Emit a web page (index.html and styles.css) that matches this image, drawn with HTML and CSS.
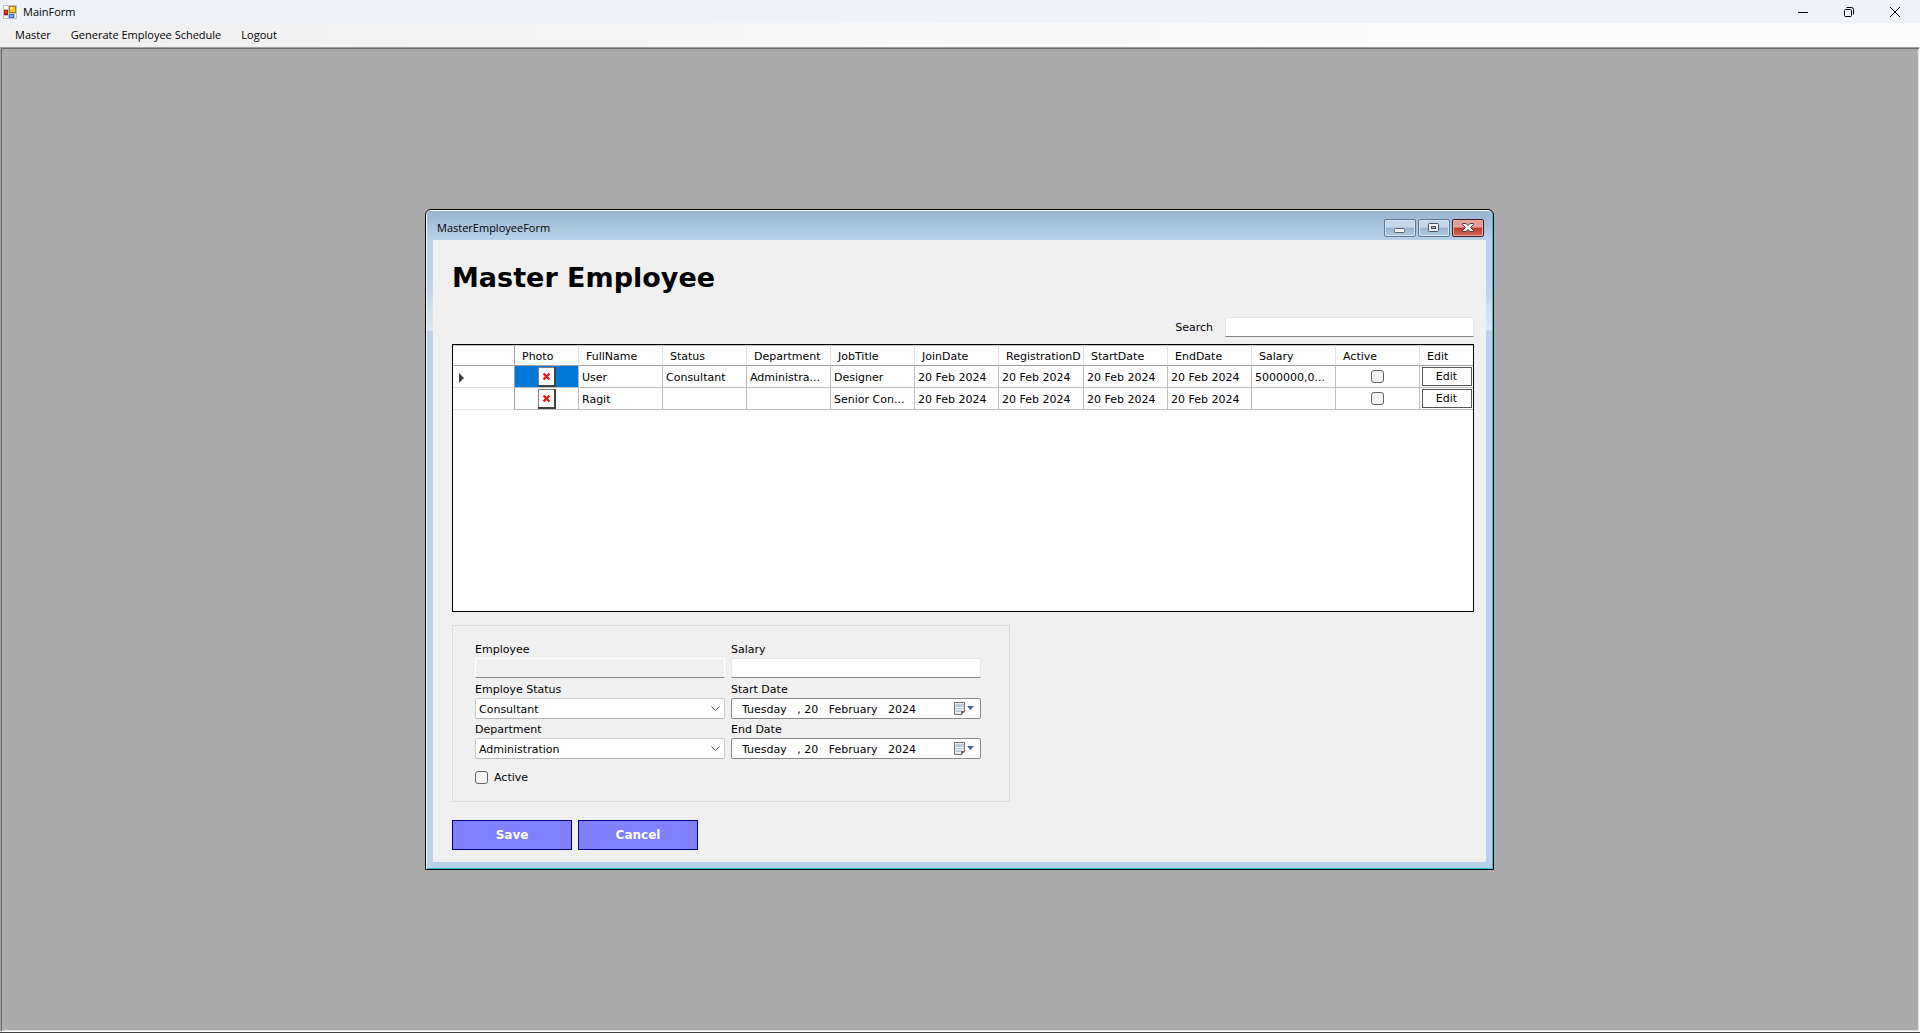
FILE: index.html
```html
<!DOCTYPE html>
<html lang="en">
<head>
<meta charset="utf-8">
<title>MainForm</title>
<link rel="stylesheet" href="styles.css">
</head>
<body>
<header class="titlebar">
  <svg class="app-icon" width="14" height="14" viewBox="0 0 14 14" shape-rendering="crispEdges">
    <rect width="14" height="14" fill="#bfc1c4"/>
    <rect x="1" y="1" width="4" height="3" fill="#f4f6f9"/><rect x="1" y="11" width="4" height="2" fill="#f4f6f9"/><rect x="12" y="9" width="1" height="4" fill="#f4f6f9"/>
    <rect x="1" y="5" width="4" height="5" fill="#a81c10"/><rect x="2" y="6" width="2" height="2" fill="#e0503c"/>
    <rect x="6" y="1" width="7" height="7" fill="#b07c10"/><rect x="7" y="2" width="5" height="5" fill="#fbc62c"/><rect x="7" y="2" width="3" height="2" fill="#ffe68a"/>
    <rect x="6" y="9" width="5" height="4" fill="#3c6fd0"/><rect x="7" y="10" width="3" height="2" fill="#7fb0ff"/>
  </svg>
  <span class="app-name">MainForm</span>
  <div class="system-buttons">
    <button type="button" aria-label="Minimize"><svg width="10" height="10"><path d="M0 5.500h10" stroke="#000"/></svg></button>
    <button type="button" aria-label="Restore"><svg width="10" height="10" fill="none" stroke="#000"><rect x=".5" y="2.500" width="7" height="7" rx="1"/><path d="M2.500.500h5a2 2 0 0 1 2 2v5"/></svg></button>
    <button type="button" aria-label="Close"><svg width="10" height="10"><path d="M0 0l10 10M10 0L0 10" stroke="#000"/></svg></button>
  </div>
</header>
<nav class="menu">
  <button type="button">Master</button>
  <button type="button">Generate Employee Schedule</button>
  <button type="button">Logout</button>
</nav>
<main class="workspace">
  <section class="window">
    <div class="window-title">
      <span>MasterEmployeeForm</span>
      <div class="caption-buttons">
        <button type="button" aria-label="Minimize"><svg width="12" height="12"><rect x=".5" y="6.500" width="10" height="4" rx="1" fill="#f4f4f4" stroke="#54606e"/></svg></button>
        <button type="button" aria-label="Maximize"><svg width="12" height="12" fill="#f4f4f4" stroke="#454d66"><rect x=".5" y="1.500" width="10" height="8" rx="1"/><rect x="3.500" y="4.500" width="4" height="2" fill="#9db4cf"/></svg></button>
        <button type="button" class="close" aria-label="Close"><svg width="12" height="12"><path d="M.5 1.500h3.500l2 2 2-2h3.500v1l-3 3 3 3v1H8l-2-2-2 2H.5v-1l3-3-3-3z" fill="#f4f4f4" stroke="#4a3a48"/></svg></button>
      </div>
    </div>
    <div class="frame">
      <form class="content">
        <h1>Master Employee</h1>
        <div class="search"><label for="search">Search</label><input id="search" class="box" type="text"></div>
        <div class="grid">
          <table>
            <colgroup><col class="c-head"><col class="c-photo"><col class="c"><col class="c"><col class="c"><col class="c"><col class="c"><col class="c-reg"><col class="c"><col class="c"><col class="c"><col class="c"><col></colgroup>
            <thead>
              <tr><th></th><th>Photo</th><th>FullName</th><th>Status</th><th>Department</th><th>JobTitle</th><th>JoinDate</th><th>RegistrationD</th><th>StartDate</th><th>EndDate</th><th>Salary</th><th>Active</th><th>Edit</th></tr>
            </thead>
            <tbody>
              <tr>
                <th><svg class="marker" width="5" height="10"><path d="M0 0l5 5-5 5z" fill="#404040"/></svg></th>
                <td class="photo selected"><svg width="18" height="20"><rect width="18" height="20" fill="#404040"/><rect width="16" height="18" fill="#808080"/><rect x="1" y="1" width="15" height="17" fill="#fff"/><path d="M5.500 6.500l6 6M11.500 6.500l-6 6" stroke="#f01414" stroke-width="2.400"/></svg></td>
                <td>User</td><td>Consultant</td><td>Administra...</td><td>Designer</td><td>20 Feb 2024</td><td>20 Feb 2024</td><td>20 Feb 2024</td><td>20 Feb 2024</td><td>5000000,0...</td>
                <td class="mid"><input type="checkbox" aria-label="User active"></td><td class="mid"><button type="button" class="edit">Edit</button></td>
              </tr>
              <tr>
                <th></th>
                <td class="photo"><svg width="18" height="20"><rect width="18" height="20" fill="#404040"/><rect width="16" height="18" fill="#808080"/><rect x="1" y="1" width="15" height="17" fill="#fff"/><path d="M5.500 6.500l6 6M11.500 6.500l-6 6" stroke="#f01414" stroke-width="2.400"/></svg></td>
                <td>Ragit</td><td></td><td></td><td>Senior Con...</td><td>20 Feb 2024</td><td>20 Feb 2024</td><td>20 Feb 2024</td><td>20 Feb 2024</td><td></td>
                <td class="mid"><input type="checkbox" aria-label="Ragit active"></td><td class="mid"><button type="button" class="edit">Edit</button></td>
              </tr>
            </tbody>
          </table>
        </div>
        <div class="details">
          <div class="field"><label for="employee">Employee</label><input id="employee" class="box" type="text" disabled></div>
          <div class="field"><label for="salary">Salary</label><input id="salary" class="box" type="text"></div>
          <div class="field"><label for="status">Employe Status</label>
            <div class="combo"><select id="status"><option>Consultant</option></select><svg width="9" height="5"><path d="M.5.500l4 4 4-4" fill="none" stroke="#555"/></svg></div></div>
          <div class="field"><label for="start">Start Date</label>
            <div class="date"><input id="start" type="text" value="Tuesday   , 20   February   2024"><button type="button" aria-label="Pick start date"><svg width="20" height="13"><path d="M.5.500h10v9l-3 3h-7z" fill="#e9eef5" stroke="#75696a"/><path d="M10.500 9.500h-3v3z" fill="#75696a" stroke="#75696a"/><path d="M3 2v8M5 2v8M7 2v7M9 2v6" stroke="#a3acbf" stroke-dasharray="1 1"/><path d="M2 3.500h7M2 6.500h7M2 9.500h5" stroke="#b9c2d0"/><path d="M13 4h7l-3.500 4z" fill="#44608c"/></svg></button></div></div>
          <div class="field"><label for="department">Department</label>
            <div class="combo"><select id="department"><option>Administration</option></select><svg width="9" height="5"><path d="M.5.500l4 4 4-4" fill="none" stroke="#555"/></svg></div></div>
          <div class="field"><label for="end">End Date</label>
            <div class="date"><input id="end" type="text" value="Tuesday   , 20   February   2024"><button type="button" aria-label="Pick end date"><svg width="20" height="13"><path d="M.5.500h10v9l-3 3h-7z" fill="#e9eef5" stroke="#75696a"/><path d="M10.500 9.500h-3v3z" fill="#75696a" stroke="#75696a"/><path d="M3 2v8M5 2v8M7 2v7M9 2v6" stroke="#a3acbf" stroke-dasharray="1 1"/><path d="M2 3.500h7M2 6.500h7M2 9.500h5" stroke="#b9c2d0"/><path d="M13 4h7l-3.500 4z" fill="#44608c"/></svg></button></div></div>
          <label class="active"><input type="checkbox">Active</label>
        </div>
        <div class="actions"><button type="button">Save</button><button type="button">Cancel</button></div>
      </form>
    </div>
  </section>
</main>
</body>
</html>
```
FILE: styles.css
```css
*{box-sizing:border-box}
body{margin:0;min-height:100vh;display:flex;flex-direction:column;background:#404040;padding-bottom:1px;font:11px/16px "Open Sans","Noto Sans",sans-serif;color:#000}
button,input,select{font:inherit;color:inherit;margin:0;padding:0;border:0;background:none;border-radius:0}
svg{display:block;flex:none}

.titlebar{display:flex;align-items:center;height:23px;padding:0 2px 0 3px;background:#eef3fa}
.app-name{margin-left:6px}
.system-buttons{display:flex;margin-left:auto}
.system-buttons button{width:46px;height:20px;display:flex;align-items:center;justify-content:center}
.menu{display:flex;gap:20px;height:24px;padding:0 15px;background:linear-gradient(90deg,#f0f0f0,#fcfcfc 80%)}

.workspace{flex:1;display:flex;align-items:center;justify-content:center;padding-right:1px;background:#ababab;border:1px solid;border-color:#a0a0a0 #fff #fff #a0a0a0;box-shadow:inset 1px 1px #696969,inset -1px -1px #e3e3e3}

.window{width:1069px;max-width:100%;border:1px solid #000;border-radius:6px 6px 0 0;background:#b9d1ea;box-shadow:inset 1px 1px #fff,inset -1px -1px #2cc4de;padding:1px}
.window-title{display:flex;align-items:center;justify-content:space-between;height:29px;padding:5px 8px 0 10px;background:linear-gradient(#99b4d1,#b9d1ea);border-radius:4px 4px 0 0}
.caption-buttons{display:flex;gap:2px}
.caption-buttons button{width:32px;height:18px;display:flex;align-items:center;justify-content:center;border:1px solid #5f7592;border-radius:2px;background:linear-gradient(#c3d6ea 0 45%,#98b3cf 50%,#b4cde6);box-shadow:inset 0 0 0 1px #d4e2f1}
.caption-buttons .close{border-color:#431822;background:linear-gradient(#e5a196 0 45%,#b93a22 50%,#d0705c);box-shadow:inset 0 0 0 1px #e8aca3}
.frame{padding:0 6px 6px;background:linear-gradient(#b9d1ea,#b9d1ea 40px,#dbe8f6 90px,#b9d1ea 91px)}
.content{padding:20px 12px 12px 19px;background:#f0f0f0;font:11px/19px "DejaVu Sans",Verdana,sans-serif}
h1{margin:0 0 22px;font-size:27px;line-height:35px}

.box{width:100%;height:20px;padding:0 3px;border:1px solid #e6e6e6;border-bottom-color:#868686;background:#fff}
.box:disabled{background:#f0f0f0;border-color:#fff;border-bottom-color:#868686}
.search{display:flex;justify-content:flex-end;gap:12px;margin-bottom:7px}
.search label{line-height:21px;height:20px}
.search .box{width:249px}

.grid{min-height:268px;border:1px solid #000;background:#fff}
table{width:100%;table-layout:fixed;border-spacing:0;line-height:14px}
.c-head{width:62px}
.c-photo{width:64px}
.c{width:84px}
.c-reg{width:85px}
th,td{padding:2px 0 0 3px;text-align:left;font-weight:400;white-space:nowrap;overflow:hidden;border:0 solid #bdbdbd;border-width:0 1px 1px 0}
thead th{height:21px;padding-left:7px;border-color:#e3e3e3;border-bottom-color:#a0a0a0;border-top:1px solid #c8c8c8}
th:first-child{border-right-color:#a0a0a0}
tbody th{border-bottom-color:#e3e3e3}
tbody tr>*{height:22px}
th:last-child,td:last-child{border-right:0}
.marker{margin-left:3px}
td.photo,td.mid{padding:0}
.photo svg{margin:0 auto}
.selected{background:#0078d7}
.edit{display:block;width:50px;height:19px;margin:0 auto;padding-top:1px;border:1px solid #555;background:#fff}
input[type=checkbox]{appearance:none;display:block;width:13px;height:13px;border:1px solid #626262;border-radius:3px;background:#f4f4f4}
td input[type=checkbox]{margin:0 auto}

.details{display:grid;grid-template-columns:250px 250px;column-gap:6px;width:558px;max-width:100%;margin-top:13px;padding:13px 22px 17px;border:1px solid #dcdcdc}
.field{display:flex;flex-direction:column;height:40px}
.field label{height:19px;line-height:21px}
.field .box{flex:none}
.combo,.date{display:flex;align-items:center;position:relative;height:21px;border:1px solid #ccc;border-bottom-color:#b5b5b5;border-radius:2px;background:#fff}
.date{border-color:#858585}
.combo select{appearance:none;width:100%;height:19px;padding:1px 3px 0}
.combo svg{position:absolute;right:4px;pointer-events:none}
.date input{flex:1;min-width:0;height:19px;padding:1px 0 0 10px}
.date button{padding-right:6px}
.active{display:flex;align-items:center;gap:6px;height:13px;margin-top:12px;line-height:15px}
.actions{display:flex;gap:6px;margin-top:18px}
.actions button{width:120px;height:30px;padding-top:1px;border:1px solid #000080;background:#8080ff;color:#fff;font-weight:700;font-size:12px}
```
